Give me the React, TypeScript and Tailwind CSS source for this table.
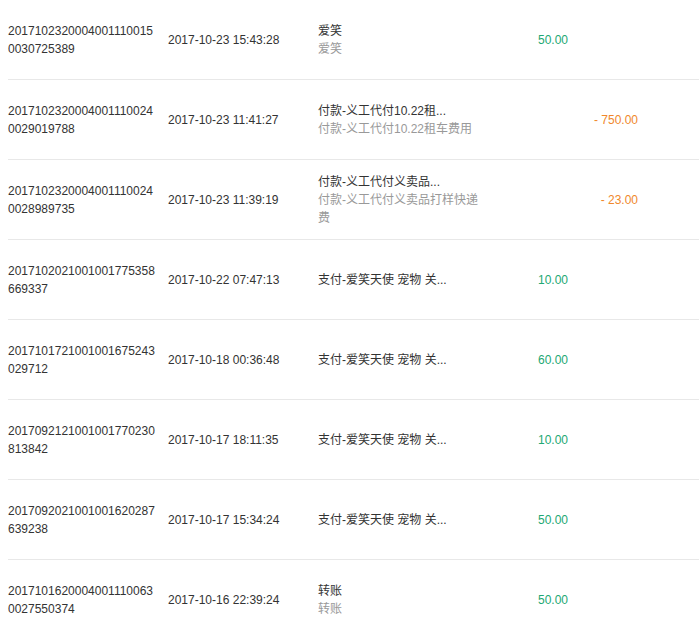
import React from 'react';

interface Txn {
  no: string;
  time: string;
  title: string;
  note?: string;
  amount: string;
  out?: boolean;
}

const rows: Txn[] = [
  { no: '20171023200040011100150030725389', time: '2017-10-23 15:43:28', title: '爱笑', note: '爱笑', amount: '50.00' },
  { no: '20171023200040011100240029019788', time: '2017-10-23 11:41:27', title: '付款-义工代付10.22租...', note: '付款-义工代付10.22租车费用', amount: '- 750.00', out: true },
  { no: '20171023200040011100240028989735', time: '2017-10-23 11:39:19', title: '付款-义工代付义卖品...', note: '付款-义工代付义卖品打样快递费', amount: '- 23.00', out: true },
  { no: '2017102021001001775358669337', time: '2017-10-22 07:47:13', title: '支付-爱笑天使 宠物 关...', amount: '10.00' },
  { no: '2017101721001001675243029712', time: '2017-10-18 00:36:48', title: '支付-爱笑天使 宠物 关...', amount: '60.00' },
  { no: '2017092121001001770230813842', time: '2017-10-17 18:11:35', title: '支付-爱笑天使 宠物 关...', amount: '10.00' },
  { no: '2017092021001001620287639238', time: '2017-10-17 15:34:24', title: '支付-爱笑天使 宠物 关...', amount: '50.00' },
  { no: '20171016200040011100630027550374', time: '2017-10-16 22:39:24', title: '转账', note: '转账', amount: '50.00' },
];

const BillRow: React.FC<{ t: Txn }> = ({ t }) => (
  <div className="flex items-center h-[80px] border-b border-[#e8e8e8]">
    <div className="w-[160px] pr-[10px] break-all">{t.no}</div>
    <div className="w-[150px]">{t.time}</div>
    <div className="w-[170px] pr-[4px]">
      <div>{t.title}</div>
      {t.note && <div className="text-[#999]">{t.note}</div>}
    </div>
    <div className="w-[80px] text-right text-[#22a873]">{t.out ? '' : t.amount}</div>
    <div className="w-[70px] text-right text-[#f0882c]">{t.out ? t.amount : ''}</div>
  </div>
);

export default function App() {
  return (
    <div className="bg-white w-[699px] h-[621px] overflow-hidden pl-[8px] text-[12px] leading-[18px] text-[#333] font-['Liberation_Sans','Noto_Sans_CJK_SC',sans-serif]">
      {rows.map((t, i) => (
        <BillRow key={i} t={t} />
      ))}
    </div>
  );
}
